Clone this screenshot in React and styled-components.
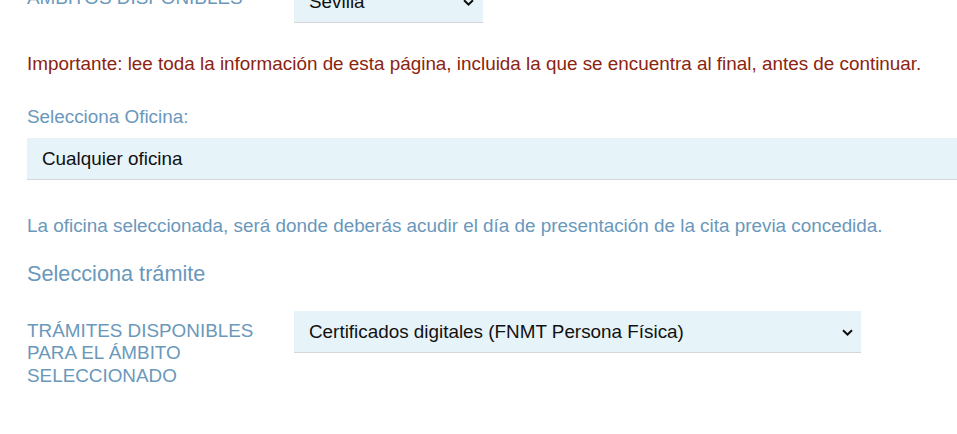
import styled, { createGlobalStyle } from 'styled-components'

const GlobalStyle = createGlobalStyle`
  html, body {
    margin: 0;
    padding: 0;
    background: #fff;
    overflow: hidden;
  }
  body {
    font-family: "Liberation Sans", Arial, sans-serif;
    font-size: 18.87px;
  }
`

const Page = styled.div`
  margin-top: -19px;
  padding-left: 27px;
  display: flex;
  flex-direction: column;
`

const FieldRow = styled.div`
  display: flex;
  align-items: flex-start;
`

const RowLabel = styled.label`
  width: 267px;
  flex-shrink: 0;
  padding-top: ${p => p.$offset || 9}px;
  color: #6a98bb;
  text-transform: uppercase;
  line-height: 22.5px;
`

const SelectWrap = styled.div`
  position: relative;
  width: ${p => p.$width};
  flex-shrink: 0;
`

const Select = styled.select`
  appearance: none;
  -webkit-appearance: none;
  display: block;
  width: 100%;
  height: 42px;
  margin: 0;
  padding: 0 40px 0 15px;
  border: none;
  border-bottom: 1px solid #d4d6d8;
  border-radius: 0;
  background: #e6f3f8;
  color: #111;
  font-family: inherit;
  font-size: 18.87px;
  outline: none;
`

const Chevron = styled.svg`
  position: absolute;
  right: ${p => p.$right || 13}px;
  top: 18px;
  width: 11px;
  height: 7px;
  pointer-events: none;
`

const Notice = styled.p`
  margin: 30px 0 0;
  color: #8b2410;
  line-height: 21.5px;
`

const FieldTitle = styled.div`
  margin-top: 31px;
  color: #6a98bb;
  line-height: 21.5px;
`

const WideSelect = styled(SelectWrap)`
  margin-top: 11px;
`

const Hint = styled.p`
  margin: 35px 0 0;
  color: #6a98bb;
  line-height: 21.5px;
`

const SectionTitle = styled.h3`
  margin: 24px 0 0;
  font-weight: normal;
  font-size: 21.7px;
  line-height: 25px;
  color: #6a98bb;
`

const LowerRow = styled(FieldRow)`
  margin-top: 25px;
`

const ArrowIcon = ({ right }) => (
  <Chevron $right={right} viewBox="0 0 11 7">
    <path d="M1 1.2 L5.5 5.5 L10 1.2" fill="none" stroke="#111" strokeWidth="2" />
  </Chevron>
)

export default function App() {
  return (
    <>
      <GlobalStyle />
      <Page>
        <FieldRow>
          <RowLabel $offset={6}>Ámbitos disponibles</RowLabel>
          <SelectWrap $width="189px">
            <Select defaultValue="sevilla">
              <option value="sevilla">Sevilla</option>
            </Select>
            <ArrowIcon right={9} />
          </SelectWrap>
        </FieldRow>

        <Notice>
          Importante: lee toda la información de esta página, incluida la que se encuentra al final, antes de continuar.
        </Notice>

        <FieldTitle>Selecciona Oficina:</FieldTitle>
        <WideSelect $width="930px">
          <Select defaultValue="any">
            <option value="any">Cualquier oficina</option>
          </Select>
        </WideSelect>

        <Hint>
          La oficina seleccionada, será donde deberás acudir el día de presentación de la cita previa concedida.
        </Hint>

        <SectionTitle>Selecciona trámite</SectionTitle>

        <LowerRow>
          <RowLabel>
            Trámites disponibles
            <br />
            para el ámbito
            <br />
            seleccionado
          </RowLabel>
          <SelectWrap $width="567px">
            <Select defaultValue="fnmt">
              <option value="fnmt">Certificados digitales (FNMT Persona Física)</option>
            </Select>
            <ArrowIcon right={8} />
          </SelectWrap>
        </LowerRow>
      </Page>
    </>
  )
}
